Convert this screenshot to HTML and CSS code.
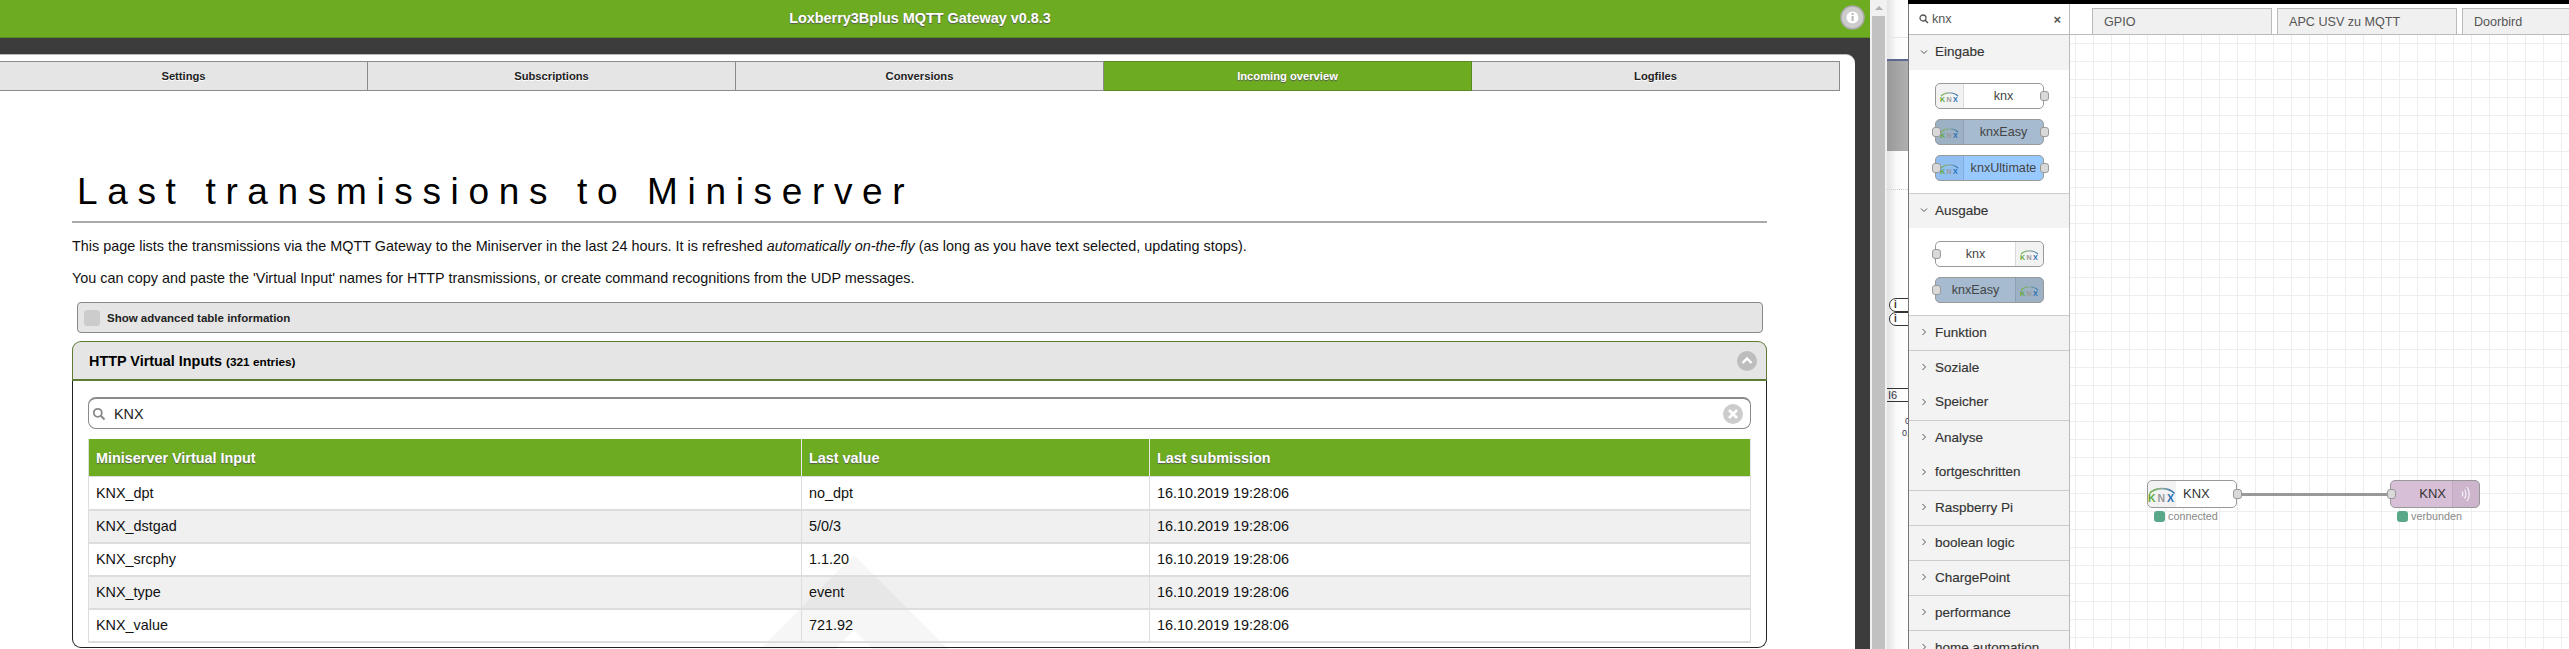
FILE: index.html
```html
<!DOCTYPE html>
<html lang="en">
<head>
<meta charset="utf-8">
<title>Loxberry MQTT Gateway and Node-RED</title>
<link rel="stylesheet" href="styles.css">
</head>
<body>
<svg class="defs" width="0" height="0" aria-hidden="true">
  <defs>
    <linearGradient id="knxarc" x1="0" x2="1" y1="0" y2="0">
      <stop offset="0" stop-color="#6db33f"/>
      <stop offset="0.5" stop-color="#8fa9a0"/>
      <stop offset="1" stop-color="#2a6fb5"/>
    </linearGradient>
    <symbol id="knx" viewBox="0 0 28 16">
      <path d="M1.5 7.5C7 1 21 1 26.5 7.5" fill="none" stroke="url(#knxarc)" stroke-width="1.6"/>
      <text x="0" y="15.5" class="knx-k">K</text>
      <text x="9.5" y="15.5" class="knx-n">N</text>
      <text x="19" y="15.5" class="knx-x">X</text>
    </symbol>
  </defs>
</svg>

<main class="browser">
  <div class="app">
    <header class="topbar">
      <div class="topbar-title">Loxberry3Bplus MQTT Gateway v0.8.3</div>
      <div class="info-btn"><svg width="25" height="25" viewBox="0 0 25 25"><circle cx="12.5" cy="12.5" r="11.5" fill="#ccc" stroke="#a9a9a9" stroke-width="1.5"/><circle cx="12.5" cy="12.5" r="6" fill="#fff"/><rect x="11.5" y="11" width="2.2" height="5" fill="#bbb"/><rect x="11.5" y="8" width="2.2" height="2" fill="#bbb"/></svg></div>
    </header>
    <div class="band"></div>
    <div class="stage">
      <div class="card">
        <svg class="watermark" width="300" height="100" viewBox="0 0 300 100"><path fill="#f6f6f6" d="M150 0L250 100H50ZM150 75L125 100H175Z" fill-rule="evenodd"/></svg>
        <nav class="tabs">
          <a class="tab">Settings</a>
          <a class="tab">Subscriptions</a>
          <a class="tab">Conversions</a>
          <a class="tab tab-active">Incoming overview</a>
          <a class="tab">Logfiles</a>
        </nav>
        <section class="content">
          <h1 class="page-title">Last transmissions to Miniserver</h1>
          <p class="lead">This page lists the transmissions via the MQTT Gateway to the Miniserver in the last 24 hours. It is refreshed <em>automatically on-the-fly</em> (as long as you have text selected, updating stops).</p>
          <p class="lead lead-second">You can copy and paste the 'Virtual Input' names for HTTP transmissions, or create command recognitions from the UDP messages.</p>
          <div class="check-bar"><span class="check-box"></span><span class="check-label">Show advanced table information</span></div>
          <div class="collapsible">
            <div class="coll-head">
              <div class="coll-title">HTTP Virtual Inputs <small>(321 entries)</small></div>
              <svg width="20" height="20" viewBox="0 0 20 20"><circle cx="10" cy="10" r="10" fill="#bdbdbd"/><path d="M5.5 12L10 7.5L14.5 12" fill="none" stroke="#fff" stroke-width="2.4"/></svg>
            </div>
            <div class="coll-body">
              <div class="search">
                <svg width="14" height="14" viewBox="0 0 14 14"><circle cx="5.8" cy="5.8" r="4" fill="none" stroke="#888" stroke-width="1.8"/><path d="M8.8 8.8L12.5 12.5" stroke="#888" stroke-width="2"/></svg>
                <span class="search-text">KNX</span>
                <svg class="search-clear" width="20" height="20" viewBox="0 0 20 20"><circle cx="10" cy="10" r="10" fill="#ccc"/><path d="M6 6L14 14M14 6L6 14" stroke="#fff" stroke-width="2.6"/></svg>
              </div>
              <table class="grid">
                <colgroup><col class="c1"><col class="c2"><col class="c3"></colgroup>
                <thead><tr><th>Miniserver Virtual Input</th><th>Last value</th><th>Last submission</th></tr></thead>
                <tbody>
                  <tr><td>KNX_dpt</td><td>no_dpt</td><td>16.10.2019 19:28:06</td></tr>
                  <tr><td>KNX_dstgad</td><td>5/0/3</td><td>16.10.2019 19:28:06</td></tr>
                  <tr><td>KNX_srcphy</td><td>1.1.20</td><td>16.10.2019 19:28:06</td></tr>
                  <tr><td>KNX_type</td><td>event</td><td>16.10.2019 19:28:06</td></tr>
                  <tr><td>KNX_value</td><td>721.92</td><td>16.10.2019 19:28:06</td></tr>
                </tbody>
              </table>
            </div>
          </div>
        </section>
      </div>
    </div>
  </div>
  <div class="scrollbar">
    <div class="scroll-arrow"></div>
    <div class="scroll-thumb"></div>
  </div>
</main>

<aside class="behind">
  <div class="behind-line"></div>
  <div class="behind-block"></div>
  <div class="behind-dots"></div>
  <div class="behind-pill behind-pill-a">i</div>
  <div class="behind-pill behind-pill-b">i</div>
  <div class="behind-box">I6</div>
  <div class="behind-num behind-num-a">0</div>
  <div class="behind-num behind-num-b">0,</div>
</aside>

<div class="nodered">
  <div class="nr-blackbar"></div>
  <div class="nr-main">
    <div class="palette">
      <div class="pal-search">
        <svg width="10" height="10" viewBox="0 0 10 10"><circle cx="4" cy="4" r="3" fill="none" stroke="#555" stroke-width="1.3"/><path d="M6.2 6.2L9 9" stroke="#555" stroke-width="1.5"/></svg>
        <span class="pal-search-text">knx</span>
        <span class="pal-clear">×</span>
      </div>
      <div class="pal-head">
        <svg class="chev" width="8" height="8" viewBox="0 0 8 8"><path d="M1 2.5L4 5.5L7 2.5" fill="none" stroke="#555" stroke-width="1"/></svg>
        <span>Eingabe</span>
      </div>
      <div class="pal-nodes">
        <div class="pnode"><span class="pnode-ico"><svg width="19" height="11"><use href="#knx"/></svg></span><span class="pnode-label">knx</span><i class="port port-r"></i></div>
        <div class="pnode pnode-easy"><span class="pnode-ico"><svg width="19" height="11"><use href="#knx"/></svg></span><span class="pnode-label">knxEasy</span><i class="port port-l"></i><i class="port port-r"></i></div>
        <div class="pnode pnode-ult"><span class="pnode-ico"><svg width="19" height="11"><use href="#knx"/></svg></span><span class="pnode-label">knxUltimate</span><i class="port port-l"></i><i class="port port-r"></i></div>
      </div>
      <div class="pal-head pal-head-line">
        <svg class="chev" width="8" height="8" viewBox="0 0 8 8"><path d="M1 2.5L4 5.5L7 2.5" fill="none" stroke="#555" stroke-width="1"/></svg>
        <span>Ausgabe</span>
      </div>
      <div class="pal-nodes pal-nodes-b">
        <div class="pnode"><span class="pnode-label">knx</span><span class="pnode-ico pnode-ico-r"><svg width="19" height="11"><use href="#knx"/></svg></span><i class="port port-l"></i></div>
        <div class="pnode pnode-easy"><span class="pnode-label">knxEasy</span><span class="pnode-ico pnode-ico-r"><svg width="19" height="11"><use href="#knx"/></svg></span><i class="port port-l"></i></div>
      </div>
      <div class="pal-row pal-row-line"><svg class="chev" width="8" height="8" viewBox="0 0 8 8"><path d="M2.5 1L5.5 4L2.5 7" fill="none" stroke="#555" stroke-width="1"/></svg><span>Funktion</span></div>
      <div class="pal-row pal-row-line"><svg class="chev" width="8" height="8" viewBox="0 0 8 8"><path d="M2.5 1L5.5 4L2.5 7" fill="none" stroke="#555" stroke-width="1"/></svg><span>Soziale</span></div>
      <div class="pal-row"><svg class="chev" width="8" height="8" viewBox="0 0 8 8"><path d="M2.5 1L5.5 4L2.5 7" fill="none" stroke="#555" stroke-width="1"/></svg><span>Speicher</span></div>
      <div class="pal-row pal-row-line"><svg class="chev" width="8" height="8" viewBox="0 0 8 8"><path d="M2.5 1L5.5 4L2.5 7" fill="none" stroke="#555" stroke-width="1"/></svg><span>Analyse</span></div>
      <div class="pal-row"><svg class="chev" width="8" height="8" viewBox="0 0 8 8"><path d="M2.5 1L5.5 4L2.5 7" fill="none" stroke="#555" stroke-width="1"/></svg><span>fortgeschritten</span></div>
      <div class="pal-row pal-row-line"><svg class="chev" width="8" height="8" viewBox="0 0 8 8"><path d="M2.5 1L5.5 4L2.5 7" fill="none" stroke="#555" stroke-width="1"/></svg><span>Raspberry Pi</span></div>
      <div class="pal-row pal-row-line"><svg class="chev" width="8" height="8" viewBox="0 0 8 8"><path d="M2.5 1L5.5 4L2.5 7" fill="none" stroke="#555" stroke-width="1"/></svg><span>boolean logic</span></div>
      <div class="pal-row pal-row-line"><svg class="chev" width="8" height="8" viewBox="0 0 8 8"><path d="M2.5 1L5.5 4L2.5 7" fill="none" stroke="#555" stroke-width="1"/></svg><span>ChargePoint</span></div>
      <div class="pal-row pal-row-line"><svg class="chev" width="8" height="8" viewBox="0 0 8 8"><path d="M2.5 1L5.5 4L2.5 7" fill="none" stroke="#555" stroke-width="1"/></svg><span>performance</span></div>
      <div class="pal-row pal-row-line"><svg class="chev" width="8" height="8" viewBox="0 0 8 8"><path d="M2.5 1L5.5 4L2.5 7" fill="none" stroke="#555" stroke-width="1"/></svg><span>home automation</span></div>
    </div>
    <div class="workspace">
      <div class="ws-tabs">
        <div class="ws-tab">GPIO</div>
        <div class="ws-tab">APC USV zu MQTT</div>
        <div class="ws-tab">Doorbird</div>
      </div>
      <div class="canvas">
        <div class="wire"></div>
        <div class="fnode fnode-in">
          <span class="fnode-ico"><svg width="28" height="16"><use href="#knx"/></svg></span>
          <span class="fnode-label">KNX</span>
          <i class="port port-r"></i>
        </div>
        <div class="fstatus fstatus-in"><i class="dot"></i><span>connected</span></div>
        <div class="fnode fnode-out">
          <span class="fnode-label fnode-label-r">KNX</span>
          <span class="fnode-ico fnode-ico-r"><svg width="14" height="20" viewBox="0 0 14 20"><g fill="none" stroke="#fff" stroke-width="1.2" opacity=".85"><path d="M3 7.5C4 9 4 11 3 12.5"/><path d="M5.5 5.5C7.5 8 7.5 12 5.5 14.5"/><path d="M8 3C11 7 11 13 8 17"/></g></svg></span>
          <i class="port port-l"></i>
        </div>
        <div class="fstatus fstatus-out"><i class="dot"></i><span>verbunden</span></div>
      </div>
    </div>
  </div>
</div>
</body>
</html>
```
FILE: styles.css
```css
* { box-sizing: border-box; }
html, body { margin: 0; padding: 0; }
body {
  width: 2569px;
  height: 649px;
  overflow: hidden;
  display: flex;
  background: #fff;
  font-family: "Liberation Sans", Arial, sans-serif;
  color: #000;
}
.defs { position: absolute; }
.knx-k, .knx-n, .knx-x { font: bold 10.5px "Liberation Sans", Arial, sans-serif; }
.knx-k { fill: #5fa83a; }
.knx-n { fill: #9a9a9a; }
.knx-x { fill: #2a6fb5; }

/* Left browser window */
.browser { flex: 0 0 1887px; display: flex; height: 649px; }
.app { flex: 0 0 1870px; display: flex; flex-direction: column; min-width: 0; }
.topbar {
  flex: 0 0 38px;
  background: #6dac20;
  border-bottom: 1px solid #5a8a22;
  display: flex;
  align-items: center;
  padding: 0 5px 1px 0;
}
.topbar-title {
  flex: 1;
  text-align: center;
  color: #fff;
  font-weight: bold;
  font-size: 14.4px;
  text-shadow: 0 1px 1px #555;
}
.info-btn { flex: 0 0 25px; height: 25px; margin-bottom: 2px; }
.info-btn svg { display: block; }
.band { flex: 0 0 16px; background: #3c3c3c; }
.stage { flex: 1; background: #3c3c3c; padding-right: 15px; min-height: 0; }
.card {
  position: relative;
  height: 100%;
  background: #fff;
  border-top: 1px solid #bbb;
  border-top-right-radius: 9px;
  padding-top: 6px;
  overflow: hidden;
}
.watermark { position: absolute; left: 704px; top: 500px; }

.tabs { display: flex; margin-left: -1px; margin-right: 15px; height: 30px; position: relative; }
.tab {
  flex: 1;
  background: #e5e5e5;
  border: 1px solid #8a8a8a;
  border-left-width: 0;
  font-size: 11.2px;
  font-weight: bold;
  color: #222;
  text-shadow: 0 1px 0 #fff;
  display: flex;
  align-items: center;
  justify-content: center;
}
.tab:first-child { border-left-width: 1px; }
.tab-active {
  background: #6dac20;
  border-color: #5a8a22;
  color: #fff;
  text-shadow: 0 1px 1px #555;
}

.content { position: relative; margin-left: 72px; width: 1695px; }
.page-title {
  margin: 79px 0 0;
  padding: 0 0 7px 5px;
  border-bottom: 2px solid #aaa;
  font-size: 37px;
  line-height: 44px;
  font-weight: normal;
  letter-spacing: 9.65px;
  white-space: nowrap;
}
.lead { margin: 13px 0 0; font-size: 14.4px; line-height: 20px; white-space: nowrap; color: #111; }
.lead-second { margin-top: 12px; }
.check-bar {
  margin: 14px 4px 0 5px;
  height: 31px;
  background: #e5e5e5;
  border: 1px solid #888;
  border-radius: 4px;
  display: flex;
  align-items: center;
  padding-left: 6px;
}
.check-box { width: 16px; height: 16px; background: #ccc; border-radius: 3px; margin-right: 7px; }
.check-label { font-size: 11.5px; font-weight: bold; color: #222; }
.collapsible { margin-top: 8px; }
.coll-head {
  height: 40px;
  background: #e5e5e5;
  border: 1px solid #5d7a33;
  border-bottom-width: 2px;
  border-radius: 9px 9px 0 0;
  display: flex;
  align-items: center;
  justify-content: space-between;
  padding: 0 9px 0 16px;
}
.coll-title { font-size: 14.4px; font-weight: bold; }
.coll-title small { font-size: 11.8px; }
.coll-body {
  height: 267px;
  border: 1px solid #222;
  border-top: 0;
  border-radius: 0 0 9px 9px;
  padding: 16px 15px 0;
}
.search {
  height: 32px;
  border: 1px solid #8a8a8a;
  border-top-width: 2px;
  border-radius: 8px;
  display: flex;
  align-items: center;
  padding: 0 1px 0 3px;
  background: rgba(255,255,255,.6);
}
.search-text { font-size: 14.4px; margin-left: 8px; color: #222; flex: 1; }
.search-clear { margin-right: 6px; }
.grid {
  margin-top: 9px;
  width: 100%;
  table-layout: fixed;
  border-collapse: collapse;
  font-size: 14.4px;
}
.c1 { width: 713px; }
.c2 { width: 348px; }
.grid th {
  height: 38px;
  background: #6dac20;
  color: #fff;
  text-align: left;
  padding: 0 7px;
  font-weight: bold;
  text-shadow: 0 1px 1px #555;
  border: 1px solid #ddd;
  border-top-color: #fff;
  border-right-color: #e8e8e8;
}
.grid td {
  height: 33px;
  padding: 0 7px;
  color: #111;
  border: 1px solid #ddd;
  border-width: 1px 1px 2px;
}
.grid tbody tr:nth-child(even) td { background: rgba(0,0,0,.058); }

.scrollbar { flex: 0 0 17px; background: #f1f1f1; display: flex; flex-direction: column; padding: 0 2px; }
.scroll-arrow {
  height: 16px;
  flex: 0 0 16px;
  position: relative;
}
.scroll-arrow::before {
  content: "";
  position: absolute;
  left: 3px;
  top: 6px;
  border-left: 4px solid transparent;
  border-right: 4px solid transparent;
  border-bottom: 4px solid #b0b0b0;
}
.scroll-thumb { flex: 1; background: #c1c1c1; }

/* Strip of the window behind */
.behind {
  position: relative;
  flex: 0 0 21px;
  height: 649px;
  background: linear-gradient(90deg, #e2e2e2, #fafafa 45%, #fff);
  overflow: hidden;
}
.behind-line { position: absolute; left: 0; right: 0; top: 37px; height: 1px; background: #e6e6e6; }
.behind-block {
  position: absolute;
  left: 0;
  right: 0;
  top: 59px;
  height: 92px;
  background: linear-gradient(90deg, #999, #b0b0b0);
  border-top: 2px solid #5a6a92;
}
.behind-dots { position: absolute; left: 0; right: 0; top: 189px; border-top: 1px dotted #ccc; }
.behind-pill {
  position: absolute;
  left: 2px;
  width: 30px;
  height: 14px;
  border: 1px solid #333;
  border-radius: 7px;
  background: #fff;
  font-size: 10px;
  line-height: 12px;
  font-weight: bold;
  padding-left: 4px;
  color: #333;
}
.behind-pill-a { top: 298px; }
.behind-pill-b { top: 312px; }
.behind-box {
  position: absolute;
  left: 0;
  right: 0;
  top: 388px;
  height: 14px;
  border-top: 1px solid #333;
  border-bottom: 1px solid #333;
  font-size: 11px;
  line-height: 12px;
  padding-left: 1px;
  color: #334;
}
.behind-num { position: absolute; font-size: 9px; line-height: 10px; color: #334; }
.behind-num-a { left: 18px; top: 416px; }
.behind-num-b { left: 15px; top: 428px; }

/* Node-RED */
.nodered { flex: 1; min-width: 0; height: 649px; display: flex; flex-direction: column; border-left: 1px solid #777; }
.nr-blackbar { flex: 0 0 4px; background: #000; margin-left: -1px; }
.nr-main { flex: 1; display: flex; min-height: 0; }
.palette {
  flex: 0 0 161px;
  border-right: 1px solid #bbb;
  background: #fff;
  display: flex;
  flex-direction: column;
  overflow: hidden;
  font-size: 12.6px;
}
.pal-search {
  flex: 0 0 31px;
  border-bottom: 1px solid #bbb;
  display: flex;
  align-items: center;
  padding: 0 8px 0 10px;
  color: #555;
}
.pal-search-text { flex: 1; margin-left: 3px; }
.pal-clear { font-weight: bold; font-size: 13px; }
.pal-head, .pal-row {
  background: #f3f3f3;
  display: flex;
  align-items: center;
  padding: 0 0 2px 11px;
  font-size: 13.5px;
  color: #333;
  -webkit-text-stroke: 0.15px #333;
  flex-shrink: 0;
}
.pal-head { height: 35px; }
.pal-head-line { border-top: 1px solid #ccc; }
.pal-row { height: 35px; }
.pal-row-line { border-top: 1px solid #ccc; }
.chev { margin-right: 7px; flex-shrink: 0; }
.pal-nodes { display: flex; flex-direction: column; gap: 10px; padding: 13px 0 12px 26px; flex-shrink: 0; }
.pal-nodes-b { padding-bottom: 12px; }
.pnode {
  position: relative;
  width: 109px;
  height: 26px;
  background: #fff;
  border: 1px solid #999;
  border-radius: 5px;
  display: flex;
  align-items: stretch;
  color: #444;
}
.pnode-easy { background: #a6bbcf; }
.pnode-ult { background: #99caff; }
.pnode-ico {
  flex: 0 0 28px;
  background: rgba(0,0,0,.05);
  border-right: 1px solid rgba(0,0,0,.1);
  border-radius: 4px 0 0 4px;
  display: flex;
  align-items: center;
  justify-content: center;
}
.pnode-ico-r { border-right: 0; border-left: 1px solid rgba(0,0,0,.1); border-radius: 0 4px 4px 0; }
.pnode-label { flex: 1; display: flex; align-items: center; justify-content: center; font-size: 12.6px; }
.port {
  position: absolute;
  top: 50%;
  width: 9px;
  height: 10px;
  margin-top: -5px;
  background: #d9d9d9;
  border: 1px solid #999;
  border-radius: 3px;
}
.port-l { left: -4.5px; }
.port-r { right: -5.5px; }

.workspace { flex: 1; min-width: 0; display: flex; flex-direction: column; }
.ws-tabs {
  flex: 0 0 31px;
  display: flex;
  gap: 5px;
  padding: 4px 0 0 22px;
  border-bottom: 1px solid #bbb;
  overflow: hidden;
}
.ws-tab {
  flex: 0 0 180px;
  background: #f0f0f0;
  border: 1px solid #bbb;
  border-bottom: 0;
  font-size: 12.6px;
  color: #555;
  display: flex;
  align-items: center;
  padding-left: 11px;
}
.canvas {
  position: relative;
  flex: 1;
  background-color: #fff;
  background-image:
    linear-gradient(90deg, #eee 1px, transparent 1px),
    linear-gradient(#eee 1px, transparent 1px);
  background-size: 18px 18px;
  background-position: 5px 8px;
}
.wire { position: absolute; left: 167px; top: 458px; width: 153px; height: 3px; background: #999; }
.fnode {
  position: absolute;
  top: 445px;
  width: 90px;
  height: 28px;
  border: 1px solid #999;
  border-radius: 5px;
  background: #fff;
  display: flex;
  align-items: stretch;
  font-size: 13px;
  color: #333;
}
.fnode-in { left: 77px; }
.fnode-out { left: 320px; background: #d8bfd8; }
.fnode-ico {
  flex: 0 0 27px;
  background: rgba(0,0,0,.05);
  border-radius: 4px 0 0 4px;
  display: flex;
  align-items: center;
  justify-content: center;
}
.fnode-ico-r { border-radius: 0 4px 4px 0; border-left: 1px solid rgba(0,0,0,.06); }
.fnode-label { flex: 1; display: flex; align-items: center; padding: 0 0 2px 7px; }
.fnode-label-r { justify-content: flex-end; padding: 0 6px 2px 0; }
.fstatus {
  position: absolute;
  top: 475px;
  display: flex;
  align-items: center;
  gap: 3px;
  font-size: 10.8px;
  color: #888;
}
.fstatus-in { left: 84px; }
.fstatus-out { left: 327px; }
.dot { width: 11px; height: 11px; border-radius: 3px; background: #5aa88a; }
```
